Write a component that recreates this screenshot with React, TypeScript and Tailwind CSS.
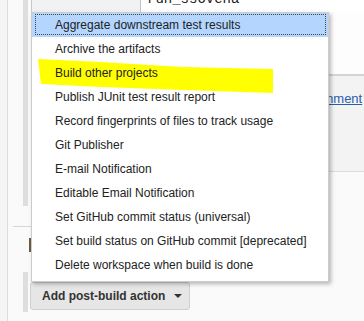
import React from "react";

const items = [
  "Aggregate downstream test results",
  "Archive the artifacts",
  "Build other projects",
  "Publish JUnit test result report",
  "Record fingerprints of files to track usage",
  "Git Publisher",
  "E-mail Notification",
  "Editable Email Notification",
  "Set GitHub commit status (universal)",
  "Set build status on GitHub commit [deprecated]",
  "Delete workspace when build is done",
];

export default function App() {
  return (
    <div
      className="relative w-[364px] h-[321px] overflow-hidden bg-[#fafafa] flex"
      style={{ fontFamily: '"Liberation Sans", Arial, sans-serif' }}
    >
      {/* left strip */}
      <div className="w-[8px] shrink-0 bg-[#f5f5f5] border-r border-[#dcdcdc]" />

      <div className="flex-1 flex flex-col">
        {/* upper section */}
        <div className="flex h-[206px]">
          <div className="w-[15px] shrink-0" />
          <div className="w-[5px] shrink-0 bg-[#dedede]" />
          <div className="w-[3px] shrink-0" />
          <div className="flex-1 flex flex-col bg-[#fcfcfc] overflow-hidden">
            {/* top input row */}
            <div className="flex h-[12px] shrink-0 overflow-hidden">
              <div className="w-[109px] border-l border-[#c8c8c8] bg-[#f2f2f2]" />
              <div className="flex-1 bg-white border-l border-[#c4c4c4] overflow-hidden">
                <div
                  className="mt-[-9px] pl-[6px] text-[14px] leading-[16px] text-[#222] whitespace-nowrap"
                  style={{ fontFamily: '"Liberation Mono", "Courier New", monospace' }}
                >
                  run_ssovena
                </div>
              </div>
            </div>
            <div className="h-[62px] shrink-0 bg-[#fdfdfd]" />
            <div className="h-[98px] shrink-0 border-t-2 border-[#d4d4d4] border-b border-b-[#dcdcdc] bg-[#f3f3f3] flex flex-col">
              <div className="h-[15px]" />
              <div className="flex pl-[251px] whitespace-nowrap">
                <span className="text-[13px] leading-[15px] text-[#2a5db0] underline">
                  Add comment
                </span>
              </div>
            </div>
            <div className="flex-1 bg-[#fafafa]" />
          </div>
        </div>

        {/* middle section */}
        <div className="flex flex-col h-[66px]">
          <div className="h-[20px]" />
          <div className="flex">
            <div className="w-[5px]" />
            <div className="w-[18px] h-[1px] bg-[#d6d6d6]" />
          </div>
          <div className="h-[11px]" />
          <div className="flex">
            <div className="w-[21px]" />
            <div className="w-[2px] h-[14px] bg-[#6e5a44]" />
          </div>
        </div>

        {/* button section */}
        <div className="flex h-[40px]">
          <div className="w-[15px] shrink-0" />
          <div className="w-[5px] shrink-0 bg-[#dedede]" />
          <div className="w-[2px] shrink-0" />
          <div className="pt-[10px]">
            <button className="h-[28px] w-[160px] flex items-center pl-[11px] bg-[#e6e6e6] border border-[#cfcfcf] rounded-[3px] text-[12px] font-bold text-[#333] whitespace-nowrap">
              <span>Add post-build action</span>
              <span className="ml-[9px] w-0 h-0 border-l-[4px] border-r-[4px] border-t-[4px] border-l-transparent border-r-transparent border-t-[#333]" />
            </button>
          </div>
        </div>
      </div>

      {/* dropdown menu overlay */}
      <div className="absolute left-[31px] top-[12px] w-[298px] bg-white border border-[#cccccc] shadow-[2px_2px_4px_rgba(0,0,0,0.28)] pb-[4px]">
        <svg
          className="absolute left-[5px] top-[45px]"
          width="240"
          height="36"
          viewBox="0 0 240 36"
        >
          <polygon
            points="1,1 64,4 146,9 236,11 236,35 146,32 64,29 4,26"
            fill="#ffff00"
          />
        </svg>
        {items.map((t, i) => (
          <div
            key={t}
            className={
              "relative h-[24px] flex items-center pl-[23px] text-[12px] text-[#222] whitespace-nowrap " +
              (i === 0 ? "bg-[#b4d5fe]" : "")
            }
          >
            {i === 0 && (
              <div className="absolute left-[3px] right-[2px] top-[1px] bottom-[2px] border border-dotted border-[#444]" />
            )}
            <span className="relative">{t}</span>
          </div>
        ))}
      </div>
    </div>
  );
}
